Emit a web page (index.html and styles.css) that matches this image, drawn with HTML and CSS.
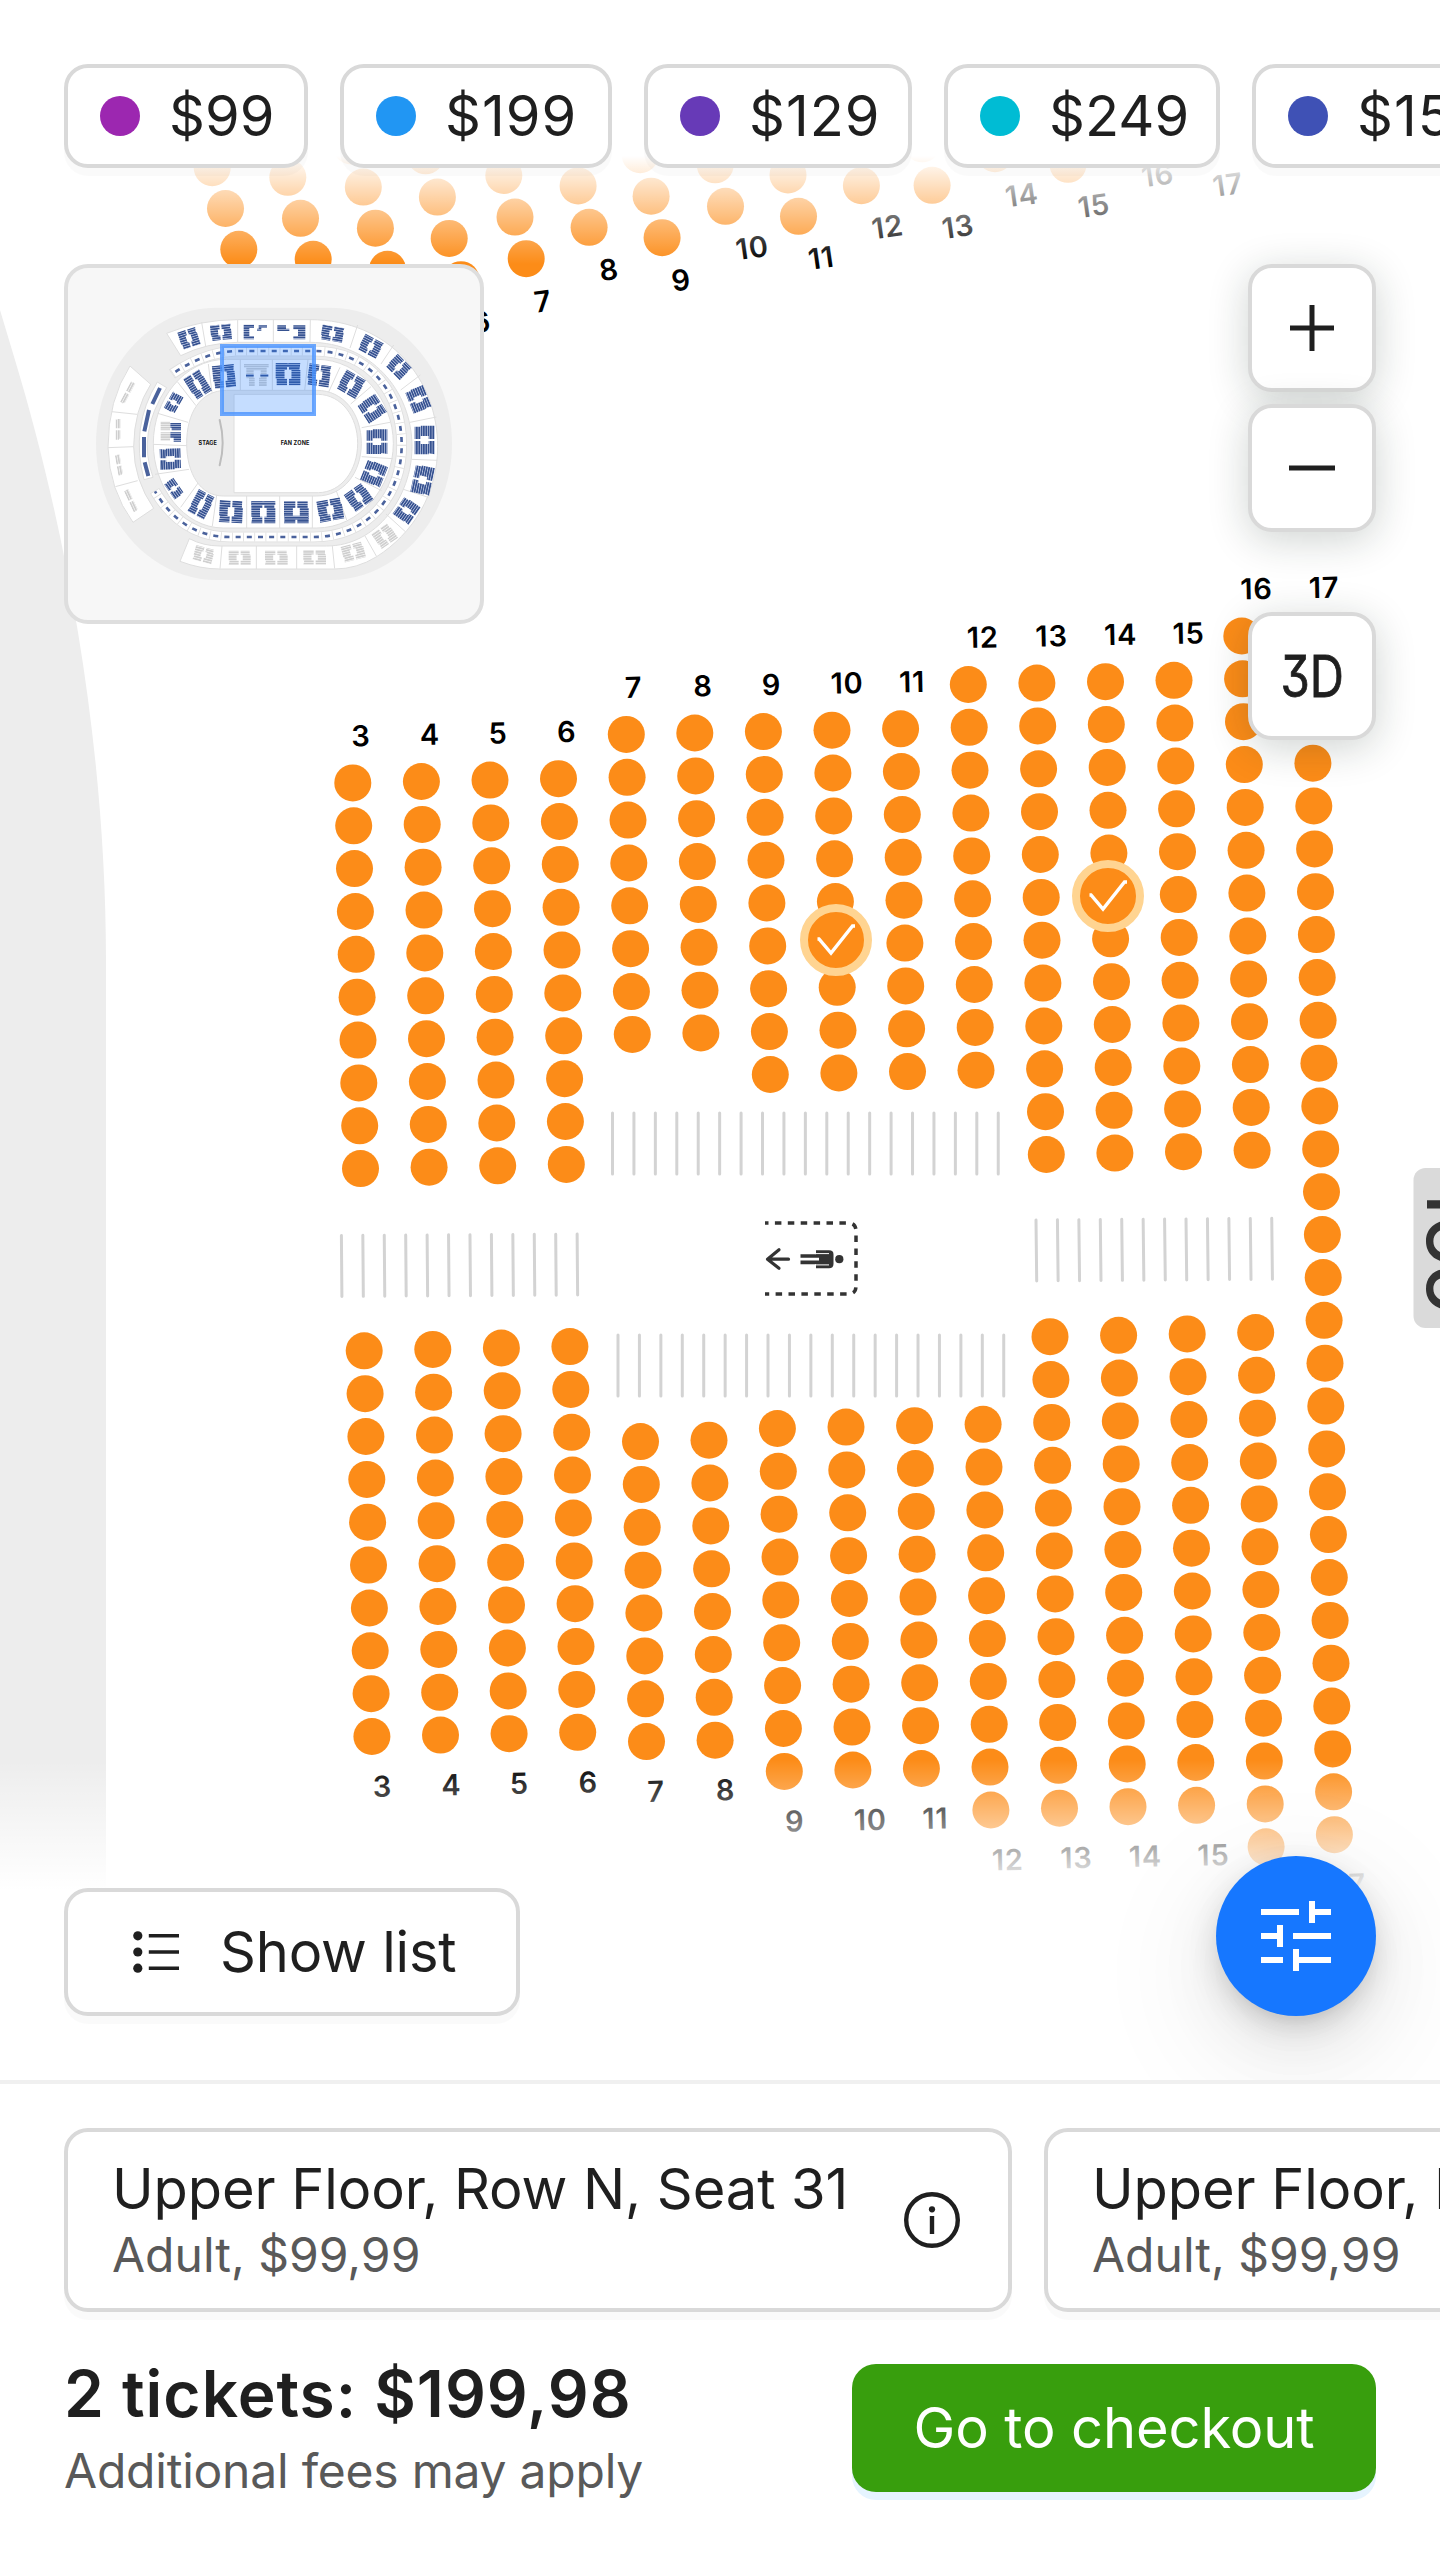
FILE: index.html
```html
<!DOCTYPE html>
<html lang="en">
<head>
<meta charset="utf-8">
<title>Seat selection</title>
<link rel="stylesheet" href="styles.css">
</head>
<body>
<div class="app">
  <main class="stage">
    <svg class="map" id="map" viewBox="0 0 1440 2080" aria-label="Seat map">
      <path class="floor" d="M0 310L15 360C68 535 106 750 106 960V2080H0Z"/>
      <g id="steps" class="steps"></g>
      <g id="seats" class="seats"></g>
      <g id="rows" class="rows"></g>
      <g class="exit">
        <path class="exit-frame" d="M765 1223H848Q856 1223 856 1231V1286Q856 1294 848 1294H765"/>
        <path class="exit-arrow" d="M788.5 1259.2H767.5M779 1249.7L767.5 1259.2L779 1268.3"/>
        <circle cx="839.3" cy="1259.2" r="4.1"/>
        <path d="M800.5 1254.2H816V1250.3H829Q833.5 1250.3 833.5 1254.5V1264Q833.5 1268.2 829 1268.2H816V1264.3H800.5V1260.6H819V1257.8H800.5Z"/>
        <path class="exit-gap" d="M815 1253.6H829M815 1264.9H829"/>
      </g>
      <g class="sector">
        <rect x="1413.5" y="1168" width="60" height="160" rx="12"/>
        <text transform="translate(1473 1313) rotate(-90)" x="0 47.5 100">GOL</text>
      </g>
      <g id="picked" class="picked"></g>
    </svg>
    <div class="fade fade-top"></div>
    <div class="fade fade-bottom"></div>

    <div class="hud">
      <div class="prices">
        <div class="chip chip-a"><i class="dot purple"></i><span>$99</span></div>
        <div class="chip chip-b"><i class="dot blue"></i><span class="wide">$199</span></div>
        <div class="chip chip-c"><i class="dot violet"></i><span class="wide">$129</span></div>
        <div class="chip chip-d"><i class="dot cyan"></i><span>$249</span></div>
        <div class="chip chip-e"><i class="dot indigo"></i><span class="wide">$159</span></div>
      </div>

      <div class="tools">
        <div class="minimap">
          <svg viewBox="24 24 1236 1056" id="mini">
            <defs>
              <pattern id="navy" width="8" height="7" patternUnits="userSpaceOnUse"><rect width="8" height="7" fill="#b4bfdc"/><rect width="8" height="4.6" fill="#34508f"/></pattern>
              <pattern id="gray" width="8" height="7" patternUnits="userSpaceOnUse"><rect width="8" height="7" fill="#f2f2f2"/><rect width="8" height="4.4" fill="#cdcdcd"/></pattern>
            </defs>
            <path fill="#ededed" d="M470 143H810C1012 143 1176 325 1176 551S1012 960 810 960H470C270 960 108 778 108 551S270 143 470 143Z"/>
            <g class="zone">
              <path d="M320 220Q420 179 533 179H750C990 179 1133 360 1133 560C1133 700 1060 820 950 890Q890 927 824 927H480Q420 927 360 904L388 836Q430 858 480 858H800C950 858 1056 710 1056 560C1056 390 930 247 750 247H533Q440 248 362 287Z"/>
              <path d="M210 318Q144 420 144 563Q148 690 219 787L281 745Q222 660 221 560Q222 450 272 373Z"/>
              <path d="M155 455L231 463M144 563L221 560M166 680L233 662"/>
              <path d="M425 187L437 258M533 179V247M640 179V247M751 179L750 247M893 195L870 264M1001 255L963 312M1081 345L1022 390M1129 471L1050 487M1132 601L1055 598M1105 712L1030 688M1036 815L978 762M950 890L915 828M824 926L817 858M710 927V858M589 927V858M480 926L486 858"/>
            </g>
            <path class="ring-line" d="M336 342Q390 305 450 286Q490 274 530 273H760C940 273 1025 410 1025 555C1025 700 930 830 760 831H510C400 831 330 770 284 692"/>
            <path class="ring-base" d="M338 341Q390 305 450 286Q490 274 530 273H760C940 273 1025 410 1025 555C1025 700 930 830 760 831H510C400 831 330 770 285 694"/>
            <path class="ring-cuts" d="M338 341Q390 305 450 286Q490 274 530 273H760C940 273 1025 410 1025 555C1025 700 930 830 760 831H510C400 831 330 770 285 694"/>
            <path class="ring-seats" d="M338 341Q390 305 450 286Q490 274 530 273H760C940 273 1025 410 1025 555C1025 700 930 830 760 831H510C400 831 330 770 285 694"/>
            <path class="zone" d="M292 366L320 383Q230 520 279 652L252 659Q210 500 292 366Z"/>
            <path class="side-seats" d="M300 384L277 432M267 450L253 514M252 531V592M254 607L265 648"/>
            <g class="zone">
              <path d="M500 298H770C900 298 1000 420 1000 550S900 804 770 804H490C370 804 280 680 280 550S370 298 500 298Z"/>
              <path d="M445 312L456 398M541 298V392M637 298V392M744 298L734 392M840 322L805 398M933 380L872 432M990 487L905 503M998 596L905 590M965 692L885 652M860 780L828 690M757 804V708M659 804V708M560 804V708M457 798L470 706M362 742L415 668M285 643L387 628M280 553L380 557M293 460L384 487M352 365L408 437"/>
            </g>
            <path fill="#ededed" stroke="#dedede" stroke-width="3" d="M500 391H770C850 391 904 460 904 550S850 708 770 708H490C420 708 380 640 380 550S420 391 500 391Z"/>
            <path class="zone" d="M522 403H775C845 405 893 470 893 550S845 697 775 698H522Z"/>
            <g id="blocks"></g>
            <path d="M479 480Q497 549 479 616" fill="none" stroke="#bdbdbd" stroke-width="6" stroke-linecap="round"/>
            <text x="443" y="555" textLength="55">STAGE</text>
            <text x="705" y="556" textLength="86">FAN ZONE</text>
            <rect x="486" y="258" width="276" height="204" fill="#1677ff" fill-opacity=".25"/>
            <rect x="486" y="258" width="276" height="204" fill="none" stroke="#4a93ff" stroke-opacity=".8" stroke-width="12"/>
          </svg>
        </div>
        <div class="controls">
          <button class="ctl" aria-label="Zoom in"><svg viewBox="0 0 120 120"><path d="M38 60H82M60 37V83"/></svg></button>
          <button class="ctl" aria-label="Zoom out"><svg viewBox="0 0 120 120"><path d="M37 60H83"/></svg></button>
          <button class="ctl ctl-3d"><span>3D</span></button>
        </div>
      </div>

      <div class="actions">
        <button class="show-list">
          <svg viewBox="0 0 44 44"><g fill="#1f1f1f"><circle cx="4.8" cy="5.8" r="4.6"/><circle cx="4.8" cy="22" r="4.6"/><circle cx="4.8" cy="38.2" r="4.6"/></g><path d="M15.8 5.8H46M15.8 22H46M15.8 38.2H46" stroke="#1f1f1f" stroke-width="3.6"/></svg>
          <span>Show list</span>
        </button>
        <button class="filters" aria-label="Filters">
          <svg viewBox="0 0 160 160"><path d="M45 56H83M96 45V67M99 56H115M45 80H61M64 69V91M77 80H115M45 104H67M80 93V115M83 104H115"/></svg>
        </button>
      </div>
    </div>
  </main>

  <footer class="cart">
    <div class="tickets">
      <article class="ticket">
        <div><h3>Upper Floor, Row N, Seat 31</h3><p>Adult, $99,99</p></div>
        <svg class="info" viewBox="0 0 56 56"><circle cx="28" cy="28" r="25.8"/><path d="M28 24V42"/><circle class="info-dot" cx="28" cy="17.3" r="3.1"/></svg>
      </article>
      <article class="ticket">
        <div><h3>Upper Floor, Row N, Seat 32</h3><p>Adult, $99,99</p></div>
      </article>
    </div>
    <div class="checkout">
      <div>
        <h2>2 tickets: $199,98</h2>
        <p>Additional fees may apply</p>
      </div>
      <button class="go">Go to checkout</button>
    </div>
  </footer>
</div>
<script src="map.js"></script>
</body>
</html>
```
FILE: styles.css
```css
*{box-sizing:border-box;margin:0}
body{font-family:Inter,"Liberation Sans",sans-serif;color:#1f1f1f;background:#fff}
button{font:inherit;color:inherit;padding:0;cursor:pointer}
.app{width:1440px;height:2560px;overflow:hidden;display:flex;flex-direction:column}

.stage{height:2080px;display:grid;grid-template:2080px / 1440px;overflow:hidden;flex:none}
.stage>*{grid-area:1/1}
.map{width:1440px;height:2080px;display:block}
.floor{fill:#ededed}
.seats{fill:#fc8c18}
.rows{font-size:29px;font-weight:600;fill:#000;letter-spacing:.8px}
.steps{stroke:#d3d3d3;stroke-width:3;stroke-linecap:round}
.picked circle{fill:#fc8c18;stroke:#ffd491;stroke-width:8}
.picked path{fill:none;stroke:#fff;stroke-width:3.4}
.exit{fill:#333}
.exit-frame{fill:none;stroke:#333;stroke-width:3.5;stroke-dasharray:6.5 6.4;stroke-dashoffset:3}
.exit-arrow{fill:none;stroke:#333;stroke-width:3.2;stroke-linecap:round;stroke-linejoin:round}
.exit-gap{stroke:#fff;stroke-width:1;fill:none}
.sector rect{fill:#dadada}
.sector text{font-size:63px;font-weight:600;fill:#333}

.fade-top{height:264px;background:linear-gradient(#fff 156px,rgba(255,255,255,0) 264px)}
.fade-bottom{align-self:end;height:320px;background:linear-gradient(rgba(255,255,255,0),#fff 130px)}

.hud{display:flex;flex-direction:column;padding:64px 0;overflow:hidden}
.prices{display:flex;gap:32px;padding-left:64px;margin-bottom:96px}
.chip,.minimap,.ctl,.show-list,.ticket{background:#fff;border:4px solid #d9d9d9;border-radius:24px}
.chip,.show-list,.ticket{box-shadow:0 8px 0 rgba(0,0,0,.02)}
.chip{flex:none;height:104px;display:flex;align-items:center;gap:29px;padding-left:32px;font-size:56px;line-height:88px;white-space:nowrap}
.chip-a{width:244px}
.chip-b{width:272px}
.chip-c{width:268px}
.chip-d,.chip-e{width:276px}
.wide{letter-spacing:1px}
.dot{width:40px;height:40px;border-radius:50%}
.purple{background:#9c27b0}
.blue{background:#2196f3}
.violet{background:#673ab7}
.cyan{background:#00bcd4}
.indigo{background:#3f51b5}

.tools{display:flex;justify-content:space-between;align-items:flex-start;padding:0 64px}
.minimap{width:420px;height:360px;background:#f7f7f7;border-color:#dedede;overflow:hidden}
.minimap svg{display:block;width:412px;height:352px}
.minimap text{font-size:16.5px;font-weight:700;text-anchor:middle;fill:#111}
.zone{fill:#fff;stroke:#dedede;stroke-width:3}
.ring-line,.ring-base,.ring-cuts,.ring-seats,.side-seats{fill:none}
.ring-line{stroke:#dedede;stroke-width:32}
.ring-base{stroke:#fff;stroke-width:27}
.ring-cuts{stroke:#dedede;stroke-width:27;stroke-dasharray:2.5 31}
.ring-seats{stroke:#4a629c;stroke-width:8;stroke-dasharray:15 18.5;stroke-dashoffset:-10}
.side-seats{stroke:#4a629c;stroke-width:12}
.controls{display:flex;flex-direction:column;gap:12px}
.ctl{width:128px;height:128px;box-shadow:0 8px 40px rgba(20,40,30,.2)}
.ctl svg{display:block;width:120px;height:120px}
.ctl path{stroke:rgba(0,0,0,.88);stroke-width:5;fill:none}
.ctl-3d{margin-top:68px;display:flex;align-items:center;justify-content:center;font-size:57px;line-height:1;font-feature-settings:"cv09"}
.ctl-3d span{transform:scaleX(.83);-webkit-text-stroke:.8px #1f1f1f}

.actions{display:flex;justify-content:space-between;align-items:flex-end;padding:0 64px;margin-top:auto}
.show-list{width:456px;height:128px;display:flex;align-items:center;padding-left:65px;gap:43px;font-size:56px;letter-spacing:-.2px}
.show-list svg{width:44px;height:44px;overflow:visible}
.filters{width:160px;height:160px;border:0;border-radius:50%;background:#1677ff;box-shadow:0 24px 64px rgba(0,0,0,.08),0 12px 24px -16px rgba(0,0,0,.12),0 36px 112px 32px rgba(0,0,0,.05),0 10px 30px rgba(0,0,0,.12)}
.filters svg{display:block}
.filters path{stroke:#fff;stroke-width:6;fill:none}

.cart{height:480px;flex:none;border-top:4px solid #f0f0f0;padding-top:44px;background:#fff;position:relative}
.tickets{display:flex;gap:32px;padding-left:64px}
.ticket{flex:none;width:948px;height:184px;padding:15px 48px 0 44px;display:flex;justify-content:space-between}
.ticket h3{font-size:56px;font-weight:400;line-height:84px;letter-spacing:-.08px}
.ticket p{font-size:48px;line-height:48px;color:#595959}
.info{width:56px;height:56px;margin-top:45px}
.info circle,.info path{fill:none;stroke:#1f1f1f;stroke-width:4.4}
.info .info-dot{fill:#1f1f1f;stroke:none}
.checkout{display:flex;justify-content:space-between;padding:52px 64px 0}
.checkout h2{font-size:64px;font-weight:600;line-height:60px;letter-spacing:1px}
.checkout p{font-size:48px;line-height:60px;margin-top:17px;color:#595959;letter-spacing:-.22px}
.go{width:524px;height:128px;border:0;border-radius:24px;background:#389e0d;color:#fff;font-size:56px;letter-spacing:-.1px;box-shadow:0 8px 0 #e6f4ff}
```
FILE: map.js
```js
const NS = 'http://www.w3.org/2000/svg';
const el = (parent, name, attrs, text) => {
  const n = document.createElementNS(NS, name);
  for (const k in attrs) n.setAttribute(k, attrs[k]);
  if (text) n.textContent = text;
  parent.appendChild(n);
  return n;
};
const $ = id => document.getElementById(id);
const seat = (x, y) => el($('seats'), 'circle', { cx: x.toFixed(1), cy: y.toFixed(1), r: 18.5 });

// Main block: seat 0 of column 3 is the origin, the grid is tilted by 1.18 degrees.
const at = (col, row) => [352.8 + (col - 3) * 68.58 + row * 0.86, 782.9 - (col - 3) * 1.41 + row * 42.86];
// [column, first row, last row, first row below the aisle, last row below the aisle]
const columns = [
  [3, 0, 9, 13.25, 22.25], [4, 0, 9, 13.25, 22.25], [5, 0, 9, 13.25, 22.25], [6, 0, 9, 13.25, 22.25],
  [7, -1, 6, 15.5, 22.5], [8, -1, 6, 15.5, 22.5],
  [9, -1, 7, 15.26, 23.26], [10, -1, 7, 15.26, 23.26], [11, -1, 7, 15.26, 23.26], [12, -2, 7, 15.26, 24.26],
  [13, -2, 9, 13.25, 24.25], [14, -2, 9, 13.25, 24.25], [15, -2, 9, 13.25, 24.25], [16, -3, 9, 13.25, 25.25],
  [17, -3, 12, 13, 25]
];
const label = (x, y, angle, text, anchor) =>
  el($('rows'), 'text', { transform: `translate(${x.toFixed(1)} ${y.toFixed(1)}) rotate(${angle})`, 'text-anchor': anchor }, text);

for (const [c, a, b, d, e] of columns) {
  for (let r = a; r <= b; r++) seat(...at(c, r));
  for (let r = d; r <= e + 0.01; r++) seat(...at(c, r));
  const [tx, ty] = at(c, a), [bx, by] = at(c, e);
  label(tx - 1.3, ty - 36.4, -1.2, String(c), 'start');
  label(bx + 1, by + 60.4, -1.2, String(c), 'start');
}

// Block above: nearest seat of each column, direction to the next one, seats shown.
const upper = [
  [238.8, 249.3, -13.3, -40.8, 4], [313.2, 259.3, -12.7, -41, 4], [387.5, 269.3, -12.1, -41.1, 4],
  [461, 279.7, -11.8, -41.3, 4], [526.2, 258.7, -11.2, -41.6, 3], [589.1, 227.3, -11, -41.4, 3],
  [662.1, 237.7, -11, -41.5, 3], [725.5, 206.3, -10.3, -41.5, 2], [798.5, 216.3, -10.5, -41.4, 2],
  [861.4, 185.7, -10.3, -41.6, 2], [932.1, 185.3, -10, -41.5, 2], [995, 153.7, -9, -41.6, 1], [1068, 164.3, -9, -41.6, 1]
];
for (const [x, y, dx, dy, n] of upper) for (let i = 0; i < n; i++) seat(x + dx * i, y + dy * i);
[[6, 480.5, 322], [7, 542.3, 301.3], [8, 608.4, 269.7], [9, 680.5, 280.3], [10, 751.7, 247.7], [11, 820.6, 258], [12, 887, 227],
 [13, 957.4, 226.7], [14, 1021.2, 195], [15, 1093.3, 205.7], [16, 1157, 175], [17, 1227.4, 184.7]]
  .forEach(([t, x, y]) => label(x + 2, y + 10.2, -8, String(t), 'middle'));

// Steps: x, y, count, slope of the run, lean of each step.
[[612.5, 1113, 19, 0, 0], [618, 1335, 19, 0, 0], [341.4, 1235.5, 12, -0.13, 0.5], [1036, 1220, 12, -0.16, 0.7]]
  .forEach(([x, y, n, dy, lean]) => {
    for (let i = 0; i < n; i++) {
      const px = x + i * 21.43, py = y + i * dy;
      el($('steps'), 'line', { x1: px, y1: py, x2: px + lean, y2: py + 61 });
    }
  });

for (const [x, y] of [[836, 940], [1108, 896]]) {
  const g = el($('picked'), 'g', { transform: `translate(${x} ${y})` });
  el(g, 'circle', { r: 32 });
  el(g, 'path', { d: 'M-18.5 -1H-17L-5 13L16.5 -14H19' });
}

// Overview blocks: x, y, rotation, width, height, fill.
const blocks = [
  [492, 349, -6, 66, 68], [684, 343, 0, 74, 66], [777, 346, 8, 66, 64], [873, 373, 30, 66, 64], [936, 446, 57, 66, 64],
  [951, 545, 90, 74, 62], [942, 640, 112, 66, 64], [896, 712, 145, 66, 62], [811, 750, 170, 74, 64], [709, 757, 180, 74, 66],
  [610, 757, 180, 72, 66], [513, 755, 183, 70, 66], [424, 733, 208, 56, 74], [342, 686, 235, 56, 34], [331, 597, 268, 62, 62],
  [341, 428, 300, 56, 36], [413, 374, 328, 56, 74],
  [387, 235, -18, 56, 54], [483, 217, -6, 62, 46], [817, 221, 10, 66, 44], [932, 259, 28, 62, 52], [1016, 321, 45, 60, 52],
  [1075, 418, 68, 70, 58], [1094, 540, 90, 86, 60], [1088, 660, 102, 84, 58], [1040, 752, 125, 64, 58],
  [974, 828, 145, 60, 54, 'gray'], [880, 876, 165, 66, 48, 'gray'], [764, 892, 180, 68, 44, 'gray'], [649, 893, 180, 68, 42, 'gray'],
  [539, 893, 180, 66, 42, 'gray'], [431, 884, 195, 58, 44, 'gray'],
  [203, 398, -62, 70, 14, 'gray'], [174, 508, -90, 62, 14, 'gray'], [177, 615, -100, 62, 14, 'gray'], [213, 722, -115, 70, 14, 'gray']
];
const put = (x, y, rot, d, fill) =>
  el($('blocks'), 'path', { d, fill: `url(#${fill || 'navy'})`, transform: `translate(${x} ${y}) rotate(${rot})` });
for (const [x, y, rot, w, h, fill] of blocks) {
  const a = w / 2, b = h / 2, g = 3, n = h > 20 ? a * 0.28 : g, k = b * 0.4;
  put(x, y, rot, `M${-a} ${-b}H${-g}V${-k}H${-n}V${k}H${-g}V${b}H${-a + 3}V${k}H${-a}Z` +
    `M${a} ${-b}H${g}V${-k}H${n}V${k}H${g}V${b}H${a}V${-k}H${a - 3}Z`, fill);
}
put(589, 345, 0, 'M-37 -33H37V-22H31V33H8V8H13V-14H-8V8H-5V33H-22V10H-30V-22H-37Z', 'gray');
put(684, 343, 0, 'M-36 -33H36V-22H-36Z');
put(610, 757, 0, 'M-36 -33H36V-22H-36Z');
put(709, 757, 0, 'M-36 10H36V22H-36Z');
put(589, 345, 0, 'M-31 -3H-8V5H-31ZM12 -3H36V5H12Z');
put(586, 216, 0, 'M-35 -22H-4V-12H-18V12H-4V22H-35ZM10 -20H35V-13H18V-4H5V-10H10Z');
put(694, 216, 0, 'M-42 -20H-16V-10H-6V-3H-42ZM6 -20H42V22H6V12H20V-8H6Z');
put(316, 515, 0, 'M-14 -30H14V-4H-14ZM-14 2H14V28H-14Z', 'gray');
put(347, 515, 0, 'M-16 -26H16V-4H-12V-12H-16ZM-16 2H16V30H-6V18H-16Z');
```
